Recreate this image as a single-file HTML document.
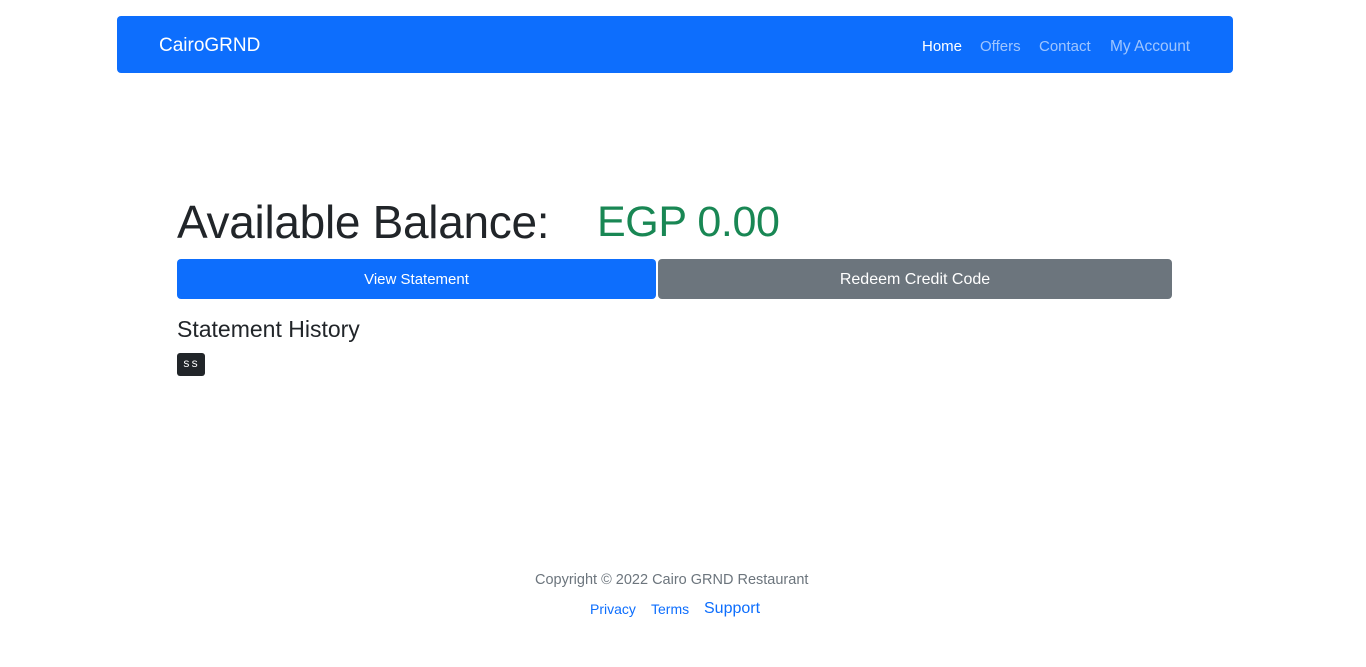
<!DOCTYPE html>
<html><head><meta charset="utf-8"><style>
body{margin:0;width:1366px;height:667px;background:#fff;font-family:"Liberation Sans",sans-serif;position:relative;overflow:hidden;color:#212529}
.a{position:absolute;white-space:nowrap}
.nav{left:117px;top:16px;width:1116px;height:57px;background:#0d6efd;border-radius:4px}
.btn{position:absolute;top:259px;height:40px;border-radius:4px;color:#fff;font-size:15px;line-height:42px;text-align:center}
</style></head><body>
<div class="a nav"></div>
<div class="a" style="left:159px;top:35px;font-size:19px;color:#fff">CairoGRND</div>
<div class="a" style="left:922px;top:38px;font-size:15px;color:#fff">Home</div>
<div class="a" style="left:980px;top:38px;font-size:15px;color:rgba(255,255,255,.6)">Offers</div>
<div class="a" style="left:1039px;top:38px;font-size:15px;color:rgba(255,255,255,.6)">Contact</div>
<div class="a" style="left:1110px;top:38px;font-size:15.5px;color:rgba(255,255,255,.6)">My Account</div>
<div class="a" style="left:177px;top:195px;font-size:46px;line-height:54px;letter-spacing:-0.3px">Available Balance:</div>
<div class="a" style="left:597px;top:195px;font-size:43px;line-height:54px;color:#198754;letter-spacing:-0.4px">EGP 0.00</div>
<div class="btn" style="left:177px;width:479px;background:#0d6efd">View Statement</div>
<div class="btn" style="left:658px;width:514px;background:#6c757d;font-size:16px">Redeem Credit Code</div>
<div class="a" style="left:177px;top:316px;font-size:23px">Statement History</div>
<div class="a" style="left:177px;top:353px;width:28px;height:23px;background:#212529;border-radius:3px;color:#fff;font-family:'Liberation Mono',monospace;font-size:12px;line-height:22px;text-align:center;letter-spacing:1px">ss</div>
<div class="a" style="left:535px;top:572px;font-size:14.5px;color:#6c757d">Copyright © 2022 Cairo GRND Restaurant</div>
<div class="a" style="left:590px;top:601px;font-size:14px;color:#0d6efd">Privacy</div>
<div class="a" style="left:651px;top:601px;font-size:14px;color:#0d6efd">Terms</div>
<div class="a" style="left:704px;top:600px;font-size:16px;color:#0d6efd">Support</div>
</body></html>
